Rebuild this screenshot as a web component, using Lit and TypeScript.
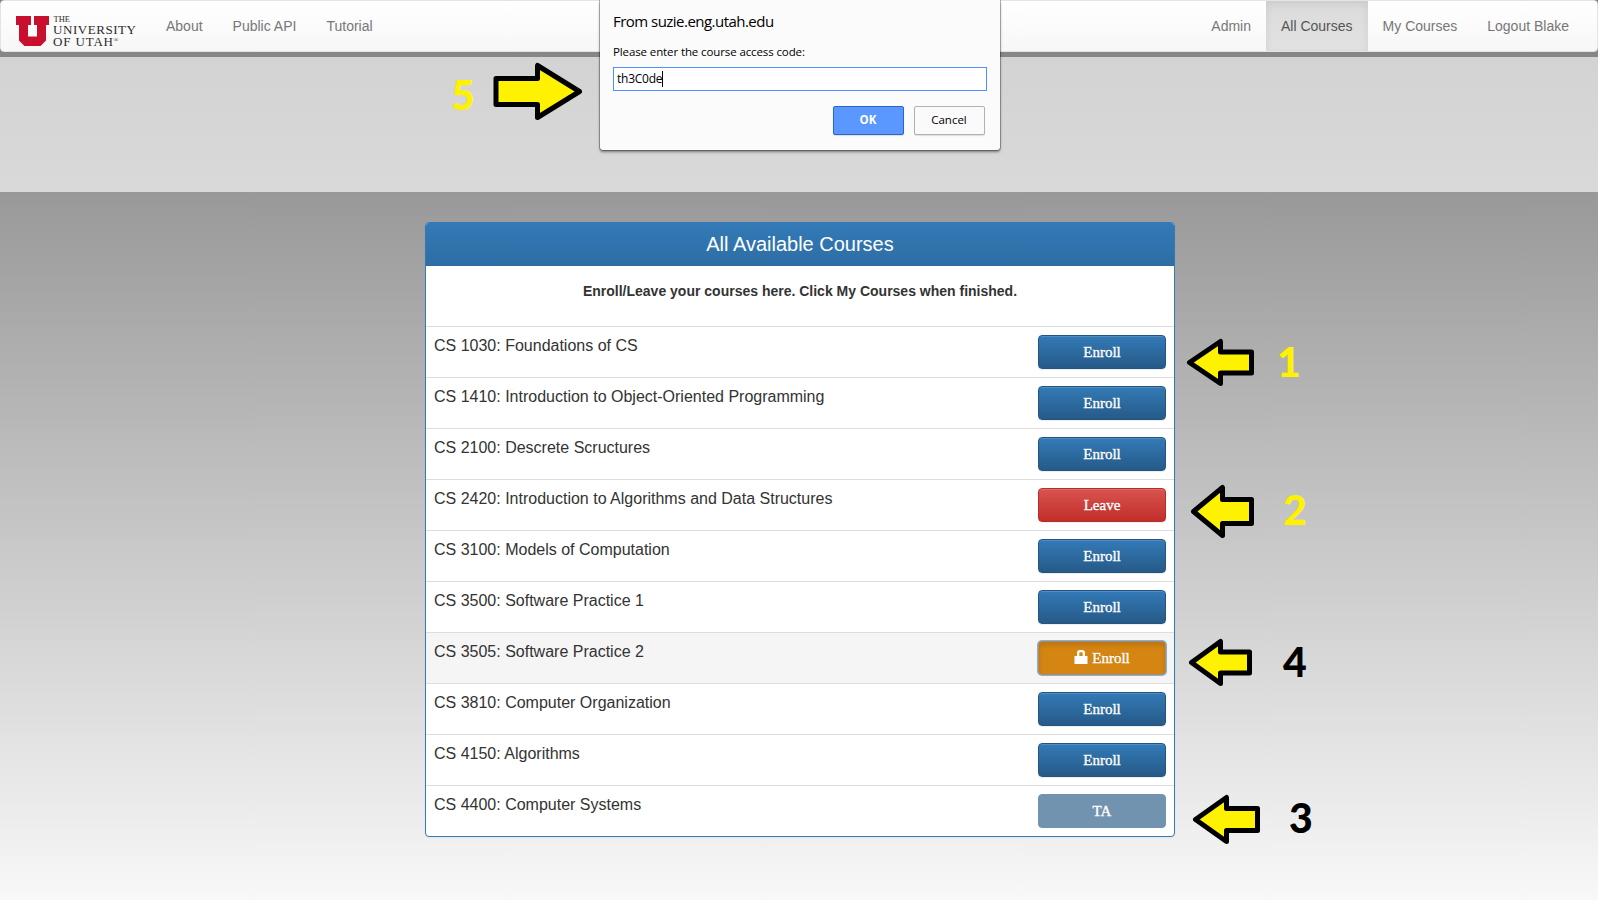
import { LitElement, html, svg, css } from "lit";
import { customElement } from "lit/decorators.js";

type Kind = "enroll" | "leave" | "locked" | "ta";
const COURSES: { name: string; kind: Kind }[] = [
  { name: "CS 1030: Foundations of CS", kind: "enroll" },
  { name: "CS 1410: Introduction to Object-Oriented Programming", kind: "enroll" },
  { name: "CS 2100: Descrete Scructures", kind: "enroll" },
  { name: "CS 2420: Introduction to Algorithms and Data Structures", kind: "leave" },
  { name: "CS 3100: Models of Computation", kind: "enroll" },
  { name: "CS 3500: Software Practice 1", kind: "enroll" },
  { name: "CS 3505: Software Practice 2", kind: "locked" },
  { name: "CS 3810: Computer Organization", kind: "enroll" },
  { name: "CS 4150: Algorithms", kind: "enroll" },
  { name: "CS 4400: Computer Systems", kind: "ta" },
];
const LABELS: Record<Kind, string> = { enroll: "Enroll", leave: "Leave", locked: "Enroll", ta: "TA" };

// Each callout: arrow tip, head base x, head half-height, body half-height, tail x, digit position.
const CALLOUTS = [
  { n: "5", tip: 579.5, y: 91.5, head: 537.5, hh: 26, bh: 13, tail: 496, dx: 463, dy: 109.5, dark: false },
  { n: "1", tip: 1189.5, y: 362.5, head: 1220.5, hh: 21, bh: 10.5, tail: 1251.5, dx: 1289, dy: 377, dark: false },
  { n: "2", tip: 1193.5, y: 511.5, head: 1222.5, hh: 24, bh: 12, tail: 1251.5, dx: 1295, dy: 525, dark: false },
  { n: "4", tip: 1191.5, y: 662.5, head: 1220.5, hh: 21, bh: 10.5, tail: 1249.5, dx: 1295, dy: 677, dark: true },
  { n: "3", tip: 1195.5, y: 819.5, head: 1226.5, hh: 22, bh: 11, tail: 1257.5, dx: 1301, dy: 833, dark: true },
];

@customElement("app-root")
export class AppRoot extends LitElement {
  static styles = css`
    :host {
      display: block;
      position: relative;
      box-sizing: border-box;
      height: 900px;
      overflow: hidden;
      background: linear-gradient(#7f7f7f, #f8f8f8);
      font: 14px/20px "Liberation Sans", Arial, sans-serif;
      color: #333;
    }
    * { box-sizing: border-box; }
    .navbar {
      display: flex;
      height: 52px;
      padding: 0 13px 0 14px;
      border: 1px solid #e4e4e4;
      border-radius: 4px;
      background: linear-gradient(#fff, #f7f7f7);
      margin-bottom: 5px;
    }
    .logo { display: block; width: 136px; height: 50px; }
    .item { padding: 15px; color: #777; white-space: nowrap; }
    .active {
      color: #555;
      background: linear-gradient(#dbdbdb, #e2e2e2);
      box-shadow: inset 0 3px 9px rgba(0, 0, 0, 0.075);
    }
    .spacer { flex: 1; }
    .banner { height: 135px; background: linear-gradient(#d3d3d3, #d9d9d9); }
    .panel {
      width: 750px;
      margin: 30px auto 0;
      transform: translateX(1px);
      border: 1px solid #337ab7;
      border-radius: 4px;
      background: #fff;
      box-shadow: 0 1px 2px rgba(0, 0, 0, 0.05);
      overflow: hidden;
    }
    .title {
      height: 43px;
      line-height: 42px;
      font-size: 20px;
      text-align: center;
      color: #fff;
      background: linear-gradient(#337ab7, #2e6da4);
    }
    .hint { height: 60px; padding-top: 15px; text-align: center; font-weight: bold; }
    .row {
      display: flex;
      justify-content: space-between;
      height: 51px;
      padding: 8px;
      border-top: 1px solid #ddd;
      font-size: 16px;
      line-height: 22px;
    }
    .row.hover { background: #f5f5f5; }
    .btn {
      display: flex;
      align-items: center;
      justify-content: center;
      gap: 4px;
      width: 128px;
      height: 34px;
      border: 1px solid #245580;
      border-radius: 4px;
      color: #fff;
      font: 15px/20px "Liberation Serif", serif;
      -webkit-text-stroke: 0.35px #fff;
      text-shadow: 0 -1px 0 rgba(0, 0, 0, 0.2);
      box-shadow: inset 0 1px 0 rgba(255, 255, 255, 0.15), 0 1px 1px rgba(0, 0, 0, 0.075);
      background: linear-gradient(#337ab7, #265a88);
    }
    .leave { border-color: #b92c28; background: linear-gradient(#d9534f, #c12e2a); }
    .locked {
      border-color: #a8905f;
      background: #d58512;
      box-shadow: inset 0 3px 5px rgba(0, 0, 0, 0.125), 0 0 0 1px #85aeea;
    }
    .ta { border-color: #7193b0; background: #7193b0; box-shadow: none; text-shadow: none; }
    .lock { width: 14px; height: 14px; margin-top: -3px; }
    .dialog {
      position: absolute;
      left: 600px;
      top: 0;
      width: 400px;
      height: 150px;
      padding: 10px 13px 0;
      background: #fbfbfb;
      border-radius: 0 0 3px 3px;
      box-shadow: 0 0 0 1px rgba(0, 0, 0, 0.25), 0 2px 3px rgba(0, 0, 0, 0.45);
      font: 12px/16px "Open Sans", "Noto Sans", sans-serif;
      color: #000;
    }
    .origin { font-size: 15px; line-height: 22px; letter-spacing: -0.53px; }
    .prompt { margin-top: 12px; font-size: 11.5px; letter-spacing: -0.11px; }
    .field {
      display: flex;
      align-items: center;
      width: 374px;
      height: 24px;
      margin-top: 7px;
      padding-left: 3px;
      border: 1px solid #4d90fe;
      background: #fff;
      letter-spacing: -0.25px;
    }
    .caret { width: 1px; height: 16px; background: #000; }
    .actions { display: flex; justify-content: flex-end; gap: 10px; padding: 15px 2px 0 0; }
    .dbtn {
      width: 71px;
      height: 29px;
      line-height: 26px;
      text-align: center;
      font-size: 11.5px;
      padding-right: 1px;
      border: 1px solid #b2b2b2;
      border-radius: 2px;
      background: #fafafa;
      box-shadow: 0 1px 1px rgba(0, 0, 0, 0.12);
    }
    .ok { color: #fff; font-weight: bold; background: #5a97ff; border-color: #2a65c8; }
    .callouts { position: absolute; left: 0; top: 0; width: 1598px; height: 900px; pointer-events: none; }
    .arrow { fill: #fff200; stroke: #000; stroke-width: 5px; stroke-linejoin: round; }
    .digit { font: 900 41px Lato, sans-serif; text-anchor: middle; fill: #fff200; }
    .digit.dark { fill: #000; }
    .logotext { font-family: "Liberation Serif", serif; fill: #2b2b2b; }
  `;

  private logo() {
    return html`<svg class="logo" viewBox="15 1 136 50">
      <path fill="#c8102e" d="M16 16H31V25H28V36.5H37V25H34V16H49V25H46V40.5L40.5 46H24.5L19 40.5V25H16Z" />
      <g class="logotext">
        <text x="53.5" y="22" font-size="8.5" textLength="16.5">THE</text>
        <text x="53" y="34" font-size="13" textLength="83">UNIVERSITY</text>
        <text x="53" y="46" font-size="13" textLength="60">OF UTAH</text>
        <text x="113.5" y="42" font-size="6.5">®</text>
      </g>
    </svg>`;
  }

  private lock() {
    return html`<svg class="lock" viewBox="0 0 14 14">
      <path fill="#fff" fill-rule="evenodd" d="M0.5 6H3V3Q3 0 6 0H8Q11 0 11 3V6H13.5V14H0.5ZM5.3 6H8.7V3.4Q8.7 2.2 7.6 2.2H6.4Q5.3 2.2 5.3 3.4Z" />
    </svg>`;
  }

  render() {
    return html`
      <nav class="navbar">
        ${this.logo()}
        <a class="item">About</a><a class="item">Public API</a><a class="item">Tutorial</a>
        <div class="spacer"></div>
        <a class="item">Admin</a><a class="item active">All Courses</a><a class="item">My Courses</a><a class="item">Logout Blake</a>
      </nav>
      <div class="banner"></div>
      <section class="panel">
        <div class="title">All Available Courses</div>
        <div class="hint">Enroll/Leave your courses here. Click My Courses when finished.</div>
        ${COURSES.map(
          (c) => html`<div class="row ${c.kind === "locked" ? "hover" : ""}">
            <span>${c.name}</span>
            <div class="btn ${c.kind}">${c.kind === "locked" ? this.lock() : ""}<span>${LABELS[c.kind]}</span></div>
          </div>`
        )}
      </section>
      <div class="dialog">
        <div class="origin">From suzie.eng.utah.edu</div>
        <div class="prompt">Please enter the course access code:</div>
        <div class="field"><span>th3C0de</span><i class="caret"></i></div>
        <div class="actions"><div class="dbtn ok">OK</div><div class="dbtn">Cancel</div></div>
      </div>
      <svg class="callouts" viewBox="0 0 1598 900">
        ${CALLOUTS.map(
          (a) => svg`<path class="arrow" d="M${a.tip} ${a.y}L${a.head} ${a.y - a.hh}V${a.y - a.bh}H${a.tail}V${a.y + a.bh}H${a.head}V${a.y + a.hh}Z"></path>
            <text class="digit ${a.dark ? "dark" : ""}" x="${a.dx}" y="${a.dy}">${a.n}</text>`
        )}
      </svg>
    `;
  }
}
